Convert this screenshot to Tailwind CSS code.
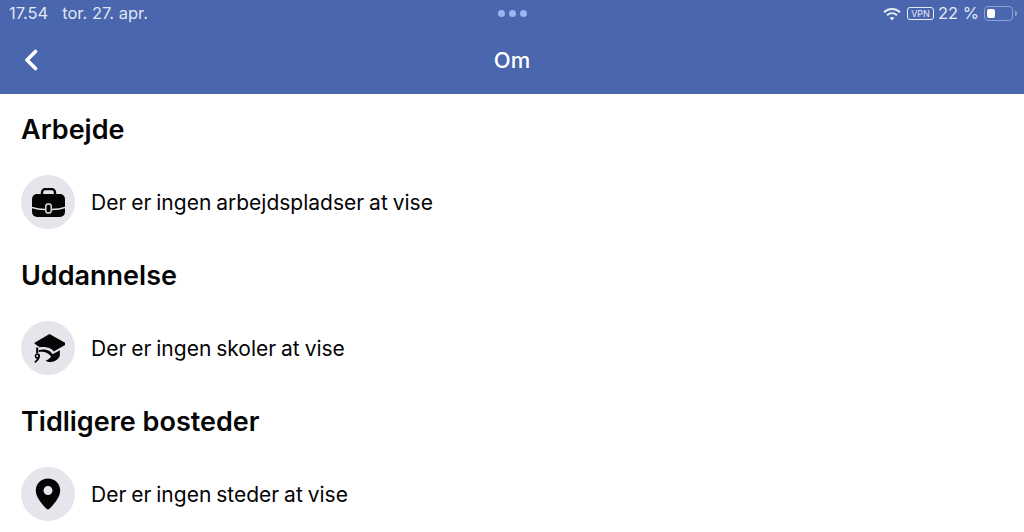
<!DOCTYPE html>
<html lang="da">
<head>
    <meta charset="UTF-8">
    <title>Om</title>
    <script src="https://cdn.jsdelivr.net/npm/@tailwindcss/browser@4"></script>
</head>
<body class="w-[1024px] h-[532px] overflow-hidden bg-white font-['Inter','Liberation_Sans',sans-serif] text-[#050505]">
    <!-- Blue header with status bar -->
    <header class="h-[94px] bg-[#4a66ae] text-white">
        <div class="relative flex items-center justify-between h-[27px] pl-[9px] pr-[7px]">
            <div class="flex gap-[14px] text-[16.5px] text-[#dfe5f3]">
                <span>17.54</span>
                <span>tor. 27. apr.</span>
            </div>
            <div class="absolute left-[498px] top-[10px] flex gap-[4px]">
                <span class="w-[7px] h-[7px] rounded-full bg-[#9db4ee]"></span>
                <span class="w-[7px] h-[7px] rounded-full bg-[#9db4ee]"></span>
                <span class="w-[7px] h-[7px] rounded-full bg-[#9db4ee]"></span>
            </div>
            <div class="flex items-center text-[#e6ebf6]">
                <svg class="w-[18px] h-[14px] mr-[6px]" viewBox="0 0 18 14" fill="none" stroke="currentColor" stroke-width="2">
                    <path d="M1 5.200C5.600 1 12.400 1 17 5.200"/>
                    <path d="M4 8.200C6.900 5.700 11.100 5.700 14 8.200"/>
                    <path d="M9 13.500L6.500 10.800C8 9.600 10 9.600 11.500 10.800Z" fill="currentColor" stroke="none"/>
                </svg>
                <span class="flex items-center justify-center w-[27px] h-[13px] mr-[4px] rounded-[3px] border border-[#e6ebf6] text-[9px] leading-none">VPN</span>
                <span class="text-[16.5px] mr-[5px]">22 %</span>
                <span class="flex items-center w-[29px] h-[15px] p-[2px] rounded-[4px] border border-[#8fa2cf]">
                    <span class="w-[8px] h-full rounded-[2px] bg-white"></span>
                </span>
                <span class="w-[2px] h-[5px] ml-[2px] rounded-r-full bg-[#8fa2cf]"></span>
            </div>
        </div>
        <div class="relative flex items-center justify-center h-[67px] pb-[1px]">
            <svg class="absolute left-[24px] top-[22px] w-[14px] h-[22px]" viewBox="0 0 14 22" fill="none" stroke="white" stroke-width="3.600" stroke-linecap="round" stroke-linejoin="round">
                <path d="M11.500 2.500L3 11L11.500 19.500"/>
            </svg>
            <h1 class="text-[22px] font-medium">Om</h1>
        </div>
    </header>

    <main class="px-[21px]">
        <section class="h-[146px]">
            <h2 class="pt-[20px] text-[27px] leading-[32px] font-semibold">Arbejde</h2>
            <div class="flex items-center gap-[16px] mt-[29px]">
                <div class="flex items-center justify-center w-[54px] h-[54px] rounded-full bg-[#e4e6eb]">
                    <svg class="w-[33px] h-[29px]" viewBox="0 0 33 29">
                        <path d="M10 7V4.500A3.500 3.500 0 0 1 13.500 1h6A3.500 3.500 0 0 1 23 4.500V7" fill="none" stroke="#050505" stroke-width="2.400"/>
                        <rect x="0" y="6" width="33" height="23" rx="5" fill="#050505"/>
                        <path d="M0 19.500C4 21 9 21.500 13 21.500M20 21.500C24 21.500 29 21 33 19.500" fill="none" stroke="#e4e6eb" stroke-width="1.400"/>
                        <rect x="13.800" y="16" width="5.400" height="9" rx="2.200" fill="#050505" stroke="#e4e6eb" stroke-width="1.400"/>
                    </svg>
                </div>
                <p class="pt-[2px] text-[21px] [word-spacing:-1px]">Der er ingen arbejdspladser at vise</p>
            </div>
        </section>
        <section class="h-[146px]">
            <h2 class="pt-[20px] text-[27px] leading-[32px] font-semibold">Uddannelse</h2>
            <div class="flex items-center gap-[16px] mt-[29px]">
                <div class="flex items-center justify-center w-[54px] h-[54px] rounded-full bg-[#e4e6eb]">
                    <svg class="w-[33px] h-[31px]" viewBox="1 1 32 30" fill="#050505">
                        <path d="M18 2L33 10.500V12.500L22 18.800C20 15.500 14 14 8.500 14.800L3.500 11.500V10.500Z"/>
                        <path d="M7.500 17.500C13 16 19 17.500 21 21.500L28 17.800V22C28 25 24 29 19 29C17 29 15.500 28.500 14 27.800C16.500 27 18.500 25.500 19.500 23.800C17 19.800 12 18.500 7.500 19.500Z"/>
                        <path d="M5 15h2v5.500h-2Z"/>
                        <path fill-rule="evenodd" d="M6 20.500a2.800 2.800 0 0 1 2.800 2.800c0 2.500-2 5-4.500 6.700l-1-1.500c1-.7 1.900-1.500 2.500-2.500a2.800 2.800 0 0 1 .2-5.500Zm0 1.800a1 1 0 1 0 0 2 1 1 0 0 0 0-2Z"/>
                    </svg>
                </div>
                <p class="pt-[2px] text-[21px] [word-spacing:-1px]">Der er ingen skoler at vise</p>
            </div>
        </section>
        <section>
            <h2 class="pt-[20px] text-[27px] leading-[32px] font-semibold">Tidligere bosteder</h2>
            <div class="flex items-center gap-[16px] mt-[29px]">
                <div class="flex items-center justify-center w-[54px] h-[54px] rounded-full bg-[#e4e6eb]">
                    <svg class="w-[26px] h-[32px]" viewBox="0 0 26 32" fill="#050505">
                        <path fill-rule="evenodd" d="M13 0.500C6 0.500 0.800 5.800 0.800 12.500C0.800 20 8 27 11.500 30.800C12.300 31.700 13.700 31.700 14.500 30.800C18 27 25.200 20 25.200 12.500C25.200 5.800 20 0.500 13 0.500ZM13 8A4.500 4.500 0 1 1 13 17A4.500 4.500 0 0 1 13 8Z"/>
                    </svg>
                </div>
                <p class="pt-[2px] text-[21px] [word-spacing:-1px]">Der er ingen steder at vise</p>
            </div>
        </section>
    </main>
</body>
</html>
